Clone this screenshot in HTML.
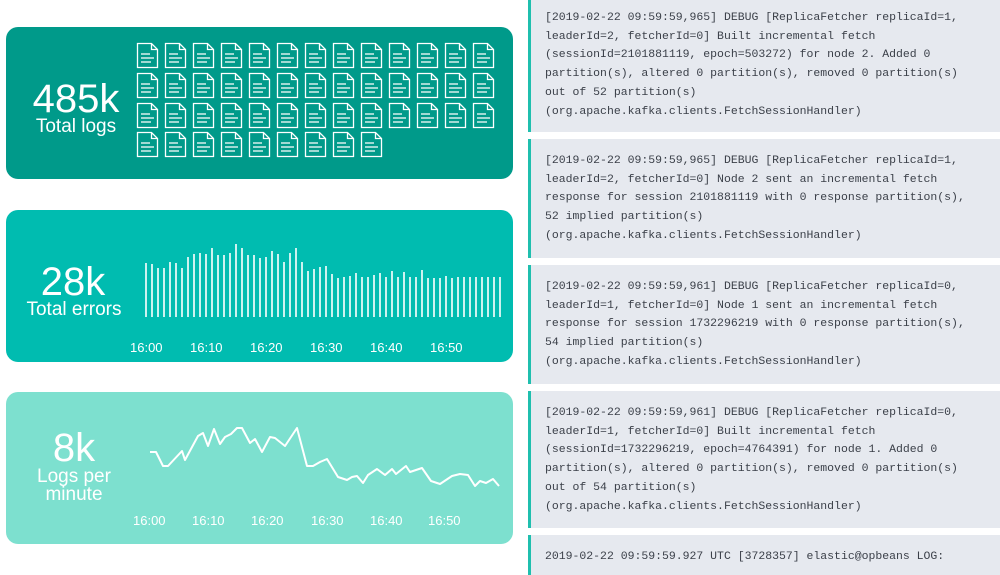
<!DOCTYPE html>
<html><head><meta charset="utf-8"><style>
*{margin:0;padding:0;box-sizing:border-box}
body{width:1000px;height:562px;overflow:hidden;background:#fff;position:relative;font-family:"Liberation Sans",sans-serif}
.card{position:absolute;left:6px;width:507px;height:152px;border-radius:12px;color:#fff}
.big{position:absolute;text-align:center;font-size:40px;line-height:40px}
.sub{position:absolute;text-align:center;font-size:19px;line-height:18px}
.lbl{position:absolute;font-size:13px;color:#fff}
.log{position:absolute;left:528px;width:472px;background:#e6e9ef;border-left:3px solid #1fbfae;padding:9px 0 0 14px;font-family:"Liberation Mono",monospace;font-size:11.48px;line-height:18.7px;color:#3a3f48;white-space:pre;overflow:hidden}
</style></head><body>
<svg style="position:absolute;left:0;top:0;width:0;height:0"><defs><g id="ic" fill="none" stroke="#fff" stroke-width="1.3"><path d="M0.5 0.5h14l6 6v18h-20z M14.5 .5v6h6"/><path d="M4 11h9M4 15h13M4 19h10"/></g>
<g id="row13"><use href="#ic" x="0"/><use href="#ic" x="28"/><use href="#ic" x="56"/><use href="#ic" x="84"/><use href="#ic" x="112"/><use href="#ic" x="140"/><use href="#ic" x="168"/><use href="#ic" x="196"/><use href="#ic" x="224"/><use href="#ic" x="252"/><use href="#ic" x="280"/><use href="#ic" x="308"/><use href="#ic" x="336"/></g></defs></svg>
<div class="card" style="top:27px;background:#009a8a">
  <div class="big" style="left:20px;width:100px;top:52px">485k</div>
  <div class="sub" style="left:18px;width:104px;top:91px">Total logs</div>
</div>
<svg style="position:absolute;left:6px;top:27px" width="507" height="152">
<use href="#row13" x="131" y="16"/><use href="#row13" x="131" y="46"/><use href="#row13" x="131" y="76"/>
<g transform="translate(131,105)"><use href="#ic" x="0"/><use href="#ic" x="28"/><use href="#ic" x="56"/><use href="#ic" x="84"/><use href="#ic" x="112"/><use href="#ic" x="140"/><use href="#ic" x="168"/><use href="#ic" x="196"/><use href="#ic" x="224"/></g>
</svg>

<div class="card" style="top:210px;background:#00bcb0">
  <div class="big" style="left:12px;width:110px;top:52px">28k</div>
  <div class="sub" style="left:6px;width:124px;top:91px">Total errors</div>
  <div class="lbl" style="left:124px;top:130px">16:00</div>
  <div class="lbl" style="left:184px;top:130px">16:10</div>
  <div class="lbl" style="left:244px;top:130px">16:20</div>
  <div class="lbl" style="left:304px;top:130px">16:30</div>
  <div class="lbl" style="left:364px;top:130px">16:40</div>
  <div class="lbl" style="left:424px;top:130px">16:50</div>
</div>
<svg style="position:absolute;left:0;top:0" width="520" height="370" stroke="#fff" stroke-width="1.6">
<path d="M146 317V263M152 317V264M158 317V268M164 317V268M170 317V262M176 317V263M182 317V268M188 317V257M194 317V254M200 317V253M206 317V254M212 317V248M218 317V255M224 317V255M230 317V253M236 317V244M242 317V248M248 317V255M254 317V255M260 317V258M266 317V257M272 317V251M278 317V254M284 317V262M290 317V253M296 317V248M302 317V262M308 317V271M314 317V269M320 317V267M326 317V266M332 317V274M338 317V278M344 317V277M350 317V276M356 317V273M362 317V277M368 317V277M374 317V275M380 317V273M386 317V277M392 317V271M398 317V277M404 317V272M410 317V277M416 317V277M422 317V270M428 317V278M434 317V278M440 317V278M446 317V276M452 317V278M458 317V277M464 317V277M470 317V277M476 317V277M482 317V277M488 317V277M494 317V277M500 317V277"/>
</svg>

<div class="card" style="top:392px;background:#7de0cf">
  <div class="big" style="left:18px;width:100px;top:36px">8k</div>
  <div class="sub" style="left:16px;width:104px;top:76px">Logs per<br>minute</div>
  <div class="lbl" style="left:127px;top:121px">16:00</div>
  <div class="lbl" style="left:186px;top:121px">16:10</div>
  <div class="lbl" style="left:245px;top:121px">16:20</div>
  <div class="lbl" style="left:305px;top:121px">16:30</div>
  <div class="lbl" style="left:364px;top:121px">16:40</div>
  <div class="lbl" style="left:422px;top:121px">16:50</div>
</div>
<svg style="position:absolute;left:0;top:0" width="520" height="562"><polyline fill="none" stroke="#fff" stroke-width="2" stroke-linejoin="round" points="150,452 156,452 163,466 168,466 182,451 185,460 198,436 203,433 208,446 214,429 220,444 225,437 231,434 237,428 242,428 250,443 255,439 262,452 270,437 275,438 285,446 297,428 307,466 313,466 320,462 327,459 338,477 347,480 352,477 357,476 363,483 368,475 377,469 385,475 392,469 396,474 406,466 410,472 422,468 431,481 440,484 452,476 460,474 468,475 475,486 480,481 486,483 493,479 499,486"/></svg>

<div class="log" style="top:0;height:132px">[2019-02-22 09:59:59,965] DEBUG [ReplicaFetcher replicaId=1,
leaderId=2, fetcherId=0] Built incremental fetch
(sessionId=2101881119, epoch=503272) for node 2. Added 0
partition(s), altered 0 partition(s), removed 0 partition(s)
out of 52 partition(s)
(org.apache.kafka.clients.FetchSessionHandler)</div>
<div class="log" style="top:139px;height:119px;padding-top:13px">[2019-02-22 09:59:59,965] DEBUG [ReplicaFetcher replicaId=1,
leaderId=2, fetcherId=0] Node 2 sent an incremental fetch
response for session 2101881119 with 0 response partition(s),
52 implied partition(s)
(org.apache.kafka.clients.FetchSessionHandler)</div>
<div class="log" style="top:265px;height:119px;padding-top:13px">[2019-02-22 09:59:59,961] DEBUG [ReplicaFetcher replicaId=0,
leaderId=1, fetcherId=0] Node 1 sent an incremental fetch
response for session 1732296219 with 0 response partition(s),
54 implied partition(s)
(org.apache.kafka.clients.FetchSessionHandler)</div>
<div class="log" style="top:391px;height:137px;padding-top:13px">[2019-02-22 09:59:59,961] DEBUG [ReplicaFetcher replicaId=0,
leaderId=1, fetcherId=0] Built incremental fetch
(sessionId=1732296219, epoch=4764391) for node 1. Added 0
partition(s), altered 0 partition(s), removed 0 partition(s)
out of 54 partition(s)
(org.apache.kafka.clients.FetchSessionHandler)</div>
<div class="log" style="top:535px;height:40px;padding-top:13px">2019-02-22 09:59:59.927 UTC [3728357] elastic@opbeans LOG:</div>
</body></html>
